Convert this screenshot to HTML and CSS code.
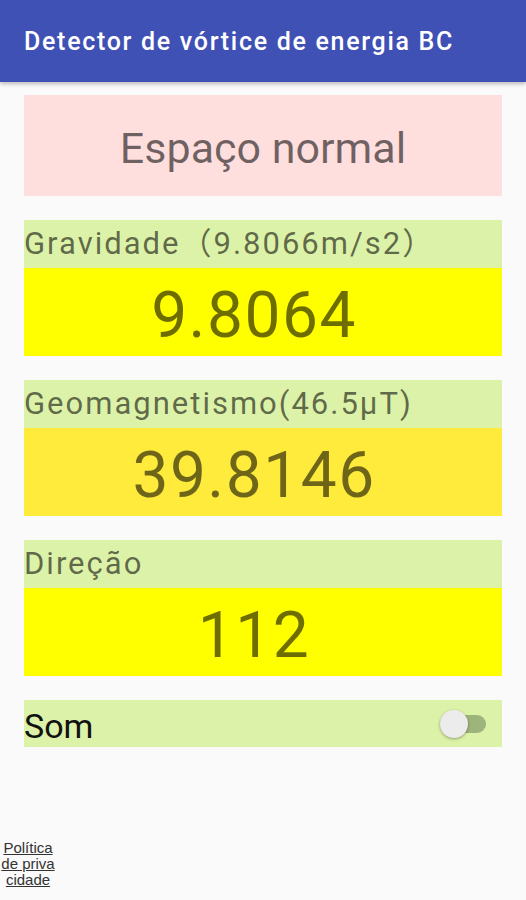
FILE: index.html
```html
<!DOCTYPE html>
<html lang="pt-BR">
<head>
  <meta charset="UTF-8" />
  <meta name="viewport" content="width=device-width, initial-scale=1.0"/>
  <title>Detector de vórtice de energia BC</title>
  <link rel="stylesheet" href="styles.css">
</head>
<body>

  <div class="appbar">Detector de vórtice de energia BC</div>

  <div class="content">
    <div class="status">Espaço normal</div>

    <div class="meter">
      <div class="label">Gravidade（9.8066m/s2）</div>
      <div class="value">9.8064</div>
    </div>

    <div class="meter">
      <div class="label">Geomagnetismo(46.5μT)</div>
      <div class="value amber">39.8146</div>
    </div>

    <div class="meter">
      <div class="label">Direção</div>
      <div class="value">112</div>
    </div>

    <div class="sound">
      <span>Som</span>
      <div class="switch"><div class="thumb"></div></div>
    </div>
  </div>

  <a class="privacy" href="#">Política<br>de priva<br>cidade</a>

</body>
</html>
```

FILE: styles.css
```css
* { box-sizing: border-box; margin: 0; padding: 0; }
body {
  font-family: Roboto, "Noto Sans CJK SC", sans-serif;
  background-color: #fafafa;
  width: 526px; height: 900px;
  position: relative; overflow: hidden;
}

.appbar {
  height: 82px; background-color: #3f51b5;
  color: white; font-size: 25px; font-weight: 500;
  letter-spacing: 1.7px; white-space: nowrap;
  padding: 27px 0 0 24px;
  box-shadow: 0 2px 4px rgba(0, 0, 0, 0.25);
}

.content {
  padding: 13px 24px 0 24px;
  display: flex; flex-direction: column; gap: 24px;
}

.status {
  height: 101px; background-color: #ffdede;
  color: rgba(0, 0, 0, 0.56);
  font-size: 43px; text-align: center; line-height: 107px;
  overflow: hidden;
}

.label {
  height: 48px; background-color: #dcf2a8;
  color: rgba(0, 0, 0, 0.58);
  font-size: 31px; line-height: 47px; letter-spacing: 2px;
  white-space: nowrap;
}

.value {
  height: 88px; background-color: #ffff00;
  color: rgba(0, 0, 0, 0.57);
  font-size: 64px; letter-spacing: 1.5px;
  text-align: center; line-height: 95px;
  padding-right: 18px; overflow: hidden;
}

.value.amber { background-color: #ffeb3b; }

.sound {
  height: 47px; background-color: #dcf2a8;
  display: flex; align-items: center; justify-content: space-between;
  padding-right: 16px; overflow: hidden;
}

.sound span {
  font-size: 34px; color: #111; line-height: 53px;
  align-self: flex-start;
}

.switch {
  width: 46px; height: 18px; border-radius: 9px;
  background-color: #9db47a; position: relative;
}

.thumb {
  position: absolute; left: 0; top: -5px;
  width: 28px; height: 28px; border-radius: 50%;
  background-color: #ececec;
  box-shadow: 0 1px 3px rgba(0, 0, 0, 0.35);
}

.privacy {
  position: absolute; left: 0; top: 840px; width: 56px;
  font-size: 15px; line-height: 16px; text-align: center;
  color: #333; font-family: "Liberation Sans", sans-serif;
}
```
